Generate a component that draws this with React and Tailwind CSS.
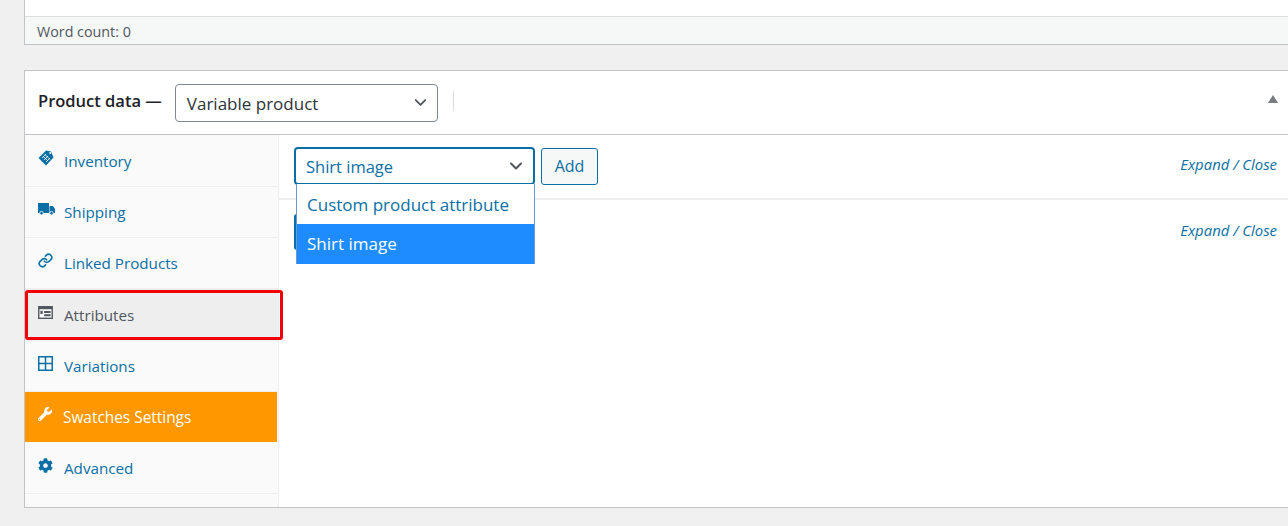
import { FaWrench, FaCog } from 'react-icons/fa';
import { ChevronDown, Link } from 'lucide-react';

function TagIcon() {
  return (
    <svg viewBox="0 0 16 16" className="w-[16px] h-[16px]">
      <path d="M8 0.5 L13 1.5 L15.5 7.5 L8 15.5 L0.5 8 Z" fill="#0a6fa5" />
      <path d="M4 8 L8 4 M6 10 L10 6 M8 12 L12 8 M5 6 L10 11 M7 4.5 L12 9.5" stroke="#fff" strokeWidth="0.8" />
      <circle cx="12.2" cy="3" r="1" fill="#fff" />
    </svg>
  );
}

function TruckIcon() {
  return (
    <svg viewBox="0 0 17 12" className="w-[17px] h-[12px]" fill="#0a6fa5">
      <path d="M0 0 H11 V10 H0 Z M11.5 3 H15 L17 6 V10 H11.5 Z" />
      <circle cx="3.5" cy="10.2" r="1.8" stroke="#fafafa" strokeWidth="0.8" />
      <circle cx="13.5" cy="10.2" r="1.8" stroke="#fafafa" strokeWidth="0.8" />
    </svg>
  );
}

function AttrIcon() {
  return (
    <svg viewBox="0 0 16 14" className="w-[15px] h-[13px]">
      <path d="M0 0 H16 V14 H0 Z" fill="#50575e" />
      <path d="M1.5 3.5 H14.5 V12.5 H1.5 Z" fill="#fff" />
      <path d="M6.5 5.5 H13.5 V7.5 H6.5 Z M6.5 9 H13.5 V11 H6.5 Z M2.5 5 H5 V8.5 H2.5 Z" fill="#50575e" />
    </svg>
  );
}

function GridIcon() {
  return (
    <svg viewBox="0 0 15 15" className="w-[15px] h-[15px]" fill="none" stroke="#0a6fa5" strokeWidth="1.5">
      <rect x="0.75" y="0.75" width="13.5" height="13.5" />
      <path d="M7.5 1 V14 M1 7.5 H14" />
    </svg>
  );
}

const tabs = [
  { label: 'Inventory', icon: <TagIcon />, tall: true, nudge: true },
  { label: 'Shipping', icon: <TruckIcon /> },
  { label: 'Linked Products', icon: <Link size={15} strokeWidth={2.6} /> },
  { label: 'Attributes', icon: <AttrIcon />, active: true, tall: true },
  { label: 'Variations', icon: <GridIcon /> },
  { label: 'Swatches Settings', icon: <FaWrench size={14} />, hot: true, nudge: true },
  { label: 'Advanced', icon: <FaCog size={15} /> },
];

function Tab({ tab }) {
  let cls = 'text-[#0a6fa5] bg-[#fafafa] border-b border-[#eeeeee]';
  if (tab.active) cls = 'text-[#50575e] bg-[#eeeeee]';
  if (tab.hot) cls = 'text-white bg-[#ff9800] border-b border-[#fafafa] mr-px';

  return (
    <li className={`relative flex items-center pl-[13px] ${tab.tall ? 'h-[52px]' : 'h-[51px]'} ${cls}`}>
      <span className={`w-[26px] h-4 -mt-[6px] flex items-center shrink-0 ${tab.hot ? '-mr-px' : ''}`}>{tab.icon}</span>
      <span className={`${tab.hot ? 'text-[15.4px]' : ''} ${tab.nudge ? 'mt-[2px]' : ''}`}>{tab.label}</span>
      {tab.active && (
        <span className="absolute left-0 -right-[5px] top-[1px] bottom-[1px] border-[3px] border-[#f00000] rounded-[3px]"></span>
      )}
    </li>
  );
}

export default function App() {
  return (
    <div className="w-[1288px] h-[526px] overflow-hidden bg-[#f0f0f1] pl-6 text-[15.2px] font-['Open_Sans','Noto_Sans',sans-serif]">
      {/* Editor footer */}
      <div className="bg-white border-l border-b border-[#c3c4c7] h-[45px]">
        <div className="h-4"></div>
        <div className="h-[28px] border-t border-[#dcdcde] bg-[#f6f7f7] pl-3 pt-[2px] flex items-center text-[14.3px] text-[#50575e]">
          Word count: 0
        </div>
      </div>

      {/* Product data box */}
      <div className="mt-[25px] h-[438px] bg-white border border-r-0 border-[#c3c4c7] flex flex-col">
        <div className="h-[64px] shrink-0 border-b border-[#c3c4c7] flex items-center pl-[13px] pr-[10px]">
          <span className="font-semibold text-[16.5px] text-[#1d2327] -mt-[2px]">Product data —</span>
          <div className="ml-[13px] w-[263px] h-[38px] border border-[#7e8993] rounded-[4px] flex items-center justify-between pl-[11px] pr-[7px] text-[17px] font-medium text-[#2c3338]">
            <span className="mt-[2px]">Variable product</span>
            <ChevronDown size={19} strokeWidth={2.4} className="text-[#50575e]" />
          </div>
          <div className="ml-[15px] h-5 w-px bg-[#dcdcde] -mt-1"></div>
          <div className="ml-auto w-0 h-0 -mt-2 border-x-[5px] border-x-transparent border-b-[8px] border-b-[#787c82]"></div>
        </div>

        <div className="flex flex-1 min-h-0">
          <ul className="w-[254px] shrink-0 bg-[#fafafa] border-r border-[#eeeeee]">
            {tabs.map((tab) => (
              <Tab key={tab.label} tab={tab} />
            ))}
          </ul>

          <div className="flex-1 relative">
            <div className="h-[65px] border-b-2 border-[#eeeeee] flex items-start justify-between pl-[15px] pr-[11px] pt-3">
              <div className="flex items-center gap-[6px]">
                <div className="w-[241px] h-[38px] border-2 border-[#0a6fa5] rounded-[4px] flex items-center justify-between pl-[10px] pr-[7px] text-[16.5px] text-[#0a6fa5] bg-white">
                  <span className="mt-[2px]">Shirt image</span>
                  <ChevronDown size={20} strokeWidth={2.4} className="text-[#50575e]" />
                </div>
                <button className="w-[57px] h-[37px] border border-[#0a6fa5] rounded-[3px] bg-[#f6f7f7] text-[#0a6fa5] text-[16px]">
                  Add
                </button>
              </div>
              <a className="italic text-[#0a6fa5] text-[14.9px] mt-[6px]">Expand / Close</a>
            </div>

            <div className="flex items-start justify-between pl-[15px] pr-[11px] pt-[14px]">
              <div className="w-10 h-9 bg-[#0a6fa5] rounded-[3px]"></div>
              <a className="italic text-[#0a6fa5] text-[14.9px] mt-[5px]">Expand / Close</a>
            </div>

            {/* Open select menu */}
            <div className="absolute left-[17px] top-[49px] w-[239px] border-x border-[#6b98d6] bg-white text-[17px]">
              <div className="h-[40px] flex items-center pl-[10px] pt-[2px] text-[#0a6fa5]">Custom product attribute</div>
              <div className="h-[40px] flex items-center pl-[10px] text-white bg-[#1e8cff]">Shirt image</div>
            </div>
          </div>
        </div>
      </div>
    </div>
  );
}
